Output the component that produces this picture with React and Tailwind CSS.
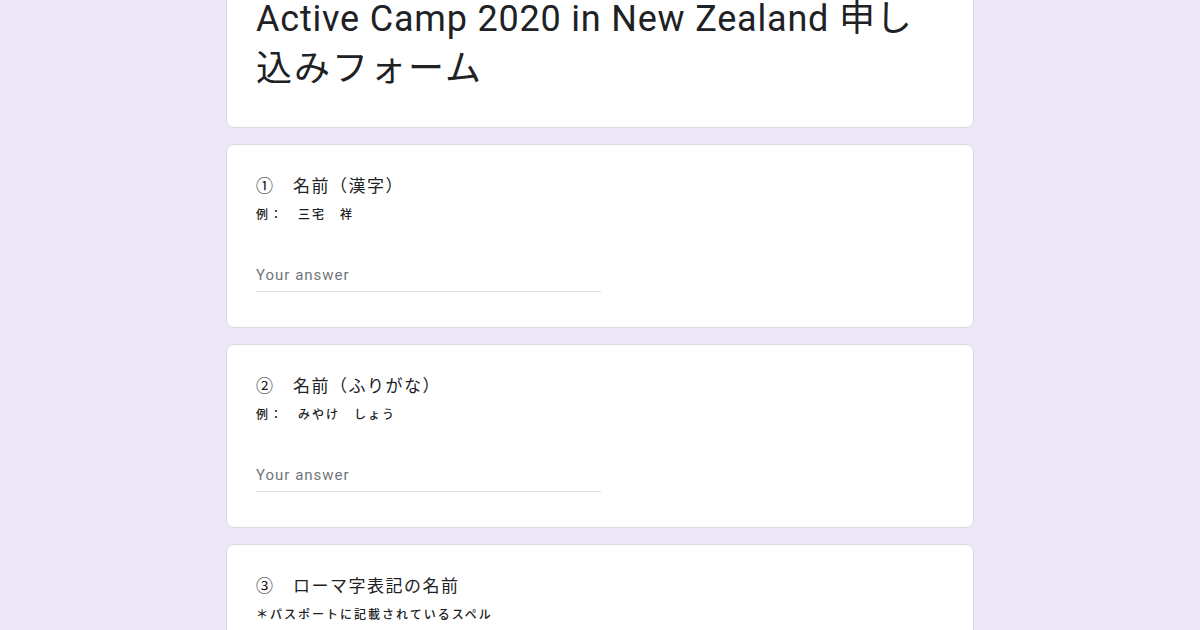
const QUESTIONS = [
  { no: '①', title: '名前（漢字）', note: '例：　三宅　祥' },
  { no: '②', title: '名前（ふりがな）', note: '例：　みやけ　しょう' },
  { no: '③', title: 'ローマ字表記の名前', note: '＊パスポートに記載されているスペル' },
];

const cjk = { fontFamily: 'Roboto, "Noto Sans CJK JP", sans-serif' };

function QuestionCard({ q }) {
  return (
    <div className="bg-white rounded-lg border border-[#dadce0] h-[184px] shrink-0 pl-[29px] pr-6 pt-[29px]">
      <div className="text-[17px] leading-6 tracking-[1.5px] text-[#202124]" style={cjk}>
        {q.no}　{q.title}
      </div>
      <div className="mt-[9px] text-[12px] leading-4 tracking-[2px] font-medium text-[#202124]" style={cjk}>
        {q.note}
      </div>
      <div className="mt-10 w-[345px] border-b border-[#e0e0e0] pb-1">
        <div className="text-[15px] leading-6 tracking-[1px] text-[#70757a]" style={{ fontFamily: 'Roboto, sans-serif' }}>
          Your answer
        </div>
      </div>
    </div>
  );
}

export default function App() {
  return (
    <div className="h-[630px] overflow-hidden bg-[#ede8f7] flex justify-center">
      <div className="w-[748px] flex flex-col gap-4 mt-[-32px]">
        <div className="bg-white rounded-lg border border-[#dadce0] pl-[29px] pr-6 pt-[25px] pb-[33px] shrink-0">
          <h1 className="text-[36px] leading-[50px] tracking-[0.8px] text-[#202124] font-normal" style={cjk}>
            Active Camp 2020 in New Zealand 申し
            <br />
            <span className="tracking-[2px]">込みフォーム</span>
          </h1>
        </div>
        {QUESTIONS.map((q) => (
          <QuestionCard key={q.no} q={q} />
        ))}
      </div>
    </div>
  );
}
